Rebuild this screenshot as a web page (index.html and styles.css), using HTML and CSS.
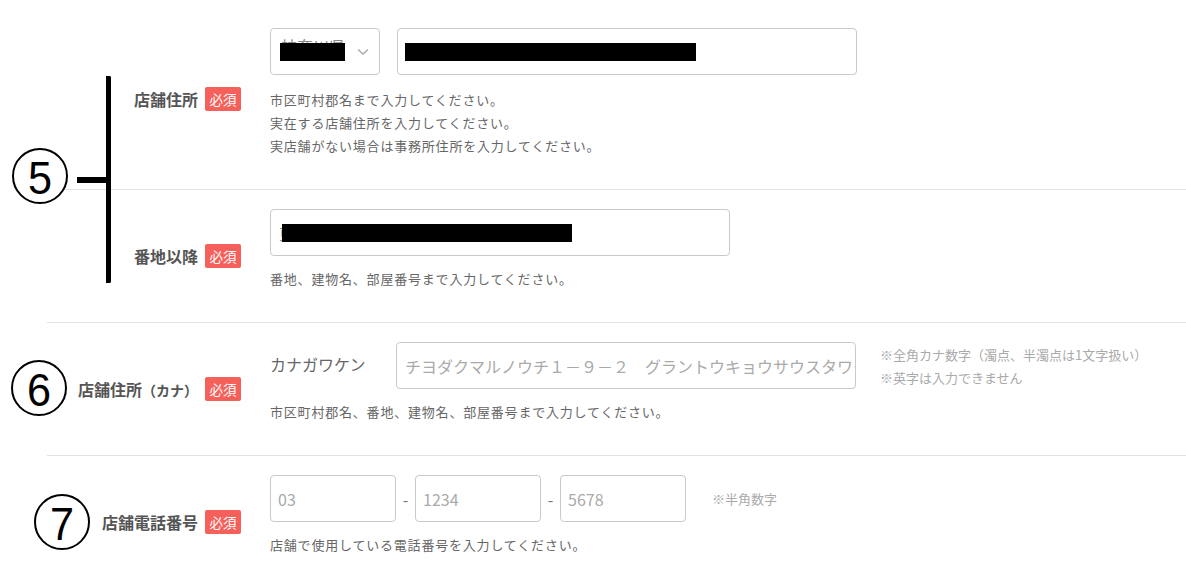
FILE: index.html
```html
<!DOCTYPE html>
<html lang="ja">

<head>
  <meta charset="UTF-8" />
  <meta name="viewport" content="width=device-width, initial-scale=1.0" />
  <title>店舗情報</title>
  <link rel="stylesheet" href="styles.css">
</head>

<body>
  <div class="page">
    <!-- 注釈 -->
    <div class="annot annot-5"><span>5</span></div>
    <div class="bracket"></div>
    <div class="bracket-tick"></div>
    <div class="annot annot-6"><span>6</span></div>
    <div class="annot annot-7"><span>7</span></div>

    <div class="form">
      <div class="row row-first">
        <div class="row-label"><span class="label">店舗住所</span><span class="badge">必須</span></div>
        <div class="row-body">
          <div class="field-line">
            <div class="field select">
              <span class="value">神奈川県</span>
              <span class="redact redact-select"></span>
              <svg class="chev" width="12" height="8" viewBox="0 0 12 8"><path d="M1 1.5 L6 6 L11 1.5" fill="none" stroke="#aaa" stroke-width="1.5"/></svg>
            </div>
            <div class="field wide gap-left">
              <span class="value">厂</span><span class="redact redact-city"></span>
            </div>
          </div>
          <p class="help">市区町村郡名まで入力してください。<br>実在する店舗住所を入力してください。<br>実店舗がない場合は事務所住所を入力してください。</p>
        </div>
      </div>

      <div class="row">
        <div class="row-label"><span class="label">番地以降</span><span class="badge">必須</span></div>
        <div class="row-body">
          <div class="field-line">
            <div class="field wide">
              <span class="value">東</span><span class="redact redact-street"></span>
            </div>
          </div>
          <p class="help">番地、建物名、部屋番号まで入力してください。</p>
        </div>
      </div>

      <div class="row">
        <div class="row-label"><span class="label">店舗住所<small>（カナ）</small></span><span class="badge">必須</span></div>
        <div class="row-body">
          <div class="field-line">
            <div class="prefix">カナガワケン</div>
            <div class="field wide">
              <span class="placeholder nowrap">チヨダクマルノウチ１－９－２　グラントウキョウサウスタワー</span>
            </div>
            <div class="note">※全角カナ数字（濁点、半濁点は1文字扱い）<br>※英字は入力できません</div>
          </div>
          <p class="help">市区町村郡名、番地、建物名、部屋番号まで入力してください。</p>
        </div>
      </div>

      <div class="row">
        <div class="row-label"><span class="label">店舗電話番号</span><span class="badge">必須</span></div>
        <div class="row-body">
          <div class="field-line">
            <div class="field tel"><span class="placeholder">03</span></div>
            <span class="dash">-</span>
            <div class="field tel"><span class="placeholder">1234</span></div>
            <span class="dash">-</span>
            <div class="field tel"><span class="placeholder">5678</span></div>
            <div class="note note-tel">※半角数字</div>
          </div>
          <p class="help">店舗で使用している電話番号を入力してください。</p>
        </div>
      </div>
    </div>
  </div>
</body>

</html>
```

FILE: styles.css
```css
body {
  margin: 0;
  background: #fff;
  font-family: "Noto Sans CJK JP", "Noto Sans", sans-serif;
  color: #555;
}

.page {
  position: relative;
  width: 1186px;
  height: 585px;
  overflow: hidden;
}

.form {
  margin-left: 47px;
  padding-top: 9px;
}

.row {
  display: grid;
  grid-template-columns: 194px 1fr;
  column-gap: 29px;
  border-top: 1px solid #e2e2e2;
}

.row-first {
  border-top: none;
  border-bottom: 1px solid #e2e2e2;
}

.row-first + .row {
  border-top: none;
}

.row-label {
  display: flex;
  justify-content: flex-end;
  align-items: center;
  gap: 7px;
}

.label {
  font-size: 16px;
  font-weight: bold;
  color: #555;
  white-space: nowrap;
}

.label small {
  font-size: 14px;
}

.badge {
  display: inline-flex;
  align-items: center;
  justify-content: center;
  width: 36px;
  height: 24px;
  border-radius: 2px;
  background: #f5605a;
  color: #fff;
  font-size: 13.5px;
}

.row-body {
  padding: 19px 0 32px;
}

.field-line {
  display: flex;
  align-items: center;
}

.field {
  position: relative;
  display: flex;
  align-items: center;
  box-sizing: border-box;
  height: 47px;
  padding: 0 8px;
  border: 1px solid #c9c9c9;
  border-radius: 4px;
  font-size: 16px;
  overflow: hidden;
}

.select {
  width: 110px;
  padding-left: 10px;
}

.select .value {
  position: relative;
  top: -6px;
}

.wide {
  width: 460px;
}

.gap-left {
  margin-left: 17px;
}

.tel {
  width: 126px;
  padding-left: 7px;
}

.value {
  color: #888;
}

.placeholder {
  color: #aaa;
}

.nowrap {
  white-space: nowrap;
}

.redact {
  display: inline-block;
  height: 18px;
  background: #000;
}

.redact-select {
  position: absolute;
  left: 9px;
  top: 14px;
  width: 65px;
}

.redact-city {
  width: 291px;
  margin-left: -17px;
}

.redact-street {
  width: 290px;
  margin-left: -13px;
}

.chev {
  position: absolute;
  right: 10px;
  top: 19px;
}

.prefix {
  width: 126px;
  font-size: 16px;
  color: #666;
  margin-top: -4px;
}

.dash {
  width: 19px;
  text-align: center;
  font-size: 16px;
  color: #777;
}

.note {
  margin-left: 24px;
  font-size: 13px;
  line-height: 23px;
  color: #aaa;
}

.note-tel {
  margin-left: 26px;
}

.help {
  margin: 11px 0 0;
  font-size: 13px;
  line-height: 23px;
  color: #666;
  letter-spacing: 0.8px;
}

.row-first .help {
  margin-top: 13px;
}

/* 注釈 */
.annot {
  position: absolute;
  box-sizing: border-box;
  width: 56px;
  height: 56px;
  border: 2px solid #000;
  border-radius: 50%;
  background: #fff;
  display: flex;
  align-items: center;
  justify-content: center;
  font-family: "Liberation Sans", sans-serif;
  font-size: 47px;
  color: #000;
  z-index: 2;
}

.annot span {
  line-height: 1;
  margin-top: 2px;
  transform: scaleX(0.92);
}

.annot-5 {
  left: 12px;
  top: 148px;
}

.annot-6 {
  left: 11px;
  top: 360px;
}

.annot-7 {
  left: 34px;
  top: 494px;
}

.bracket {
  position: absolute;
  left: 106px;
  top: 76px;
  width: 3px;
  height: 207px;
  border-left: 5px solid #000;
  border-top: 2px solid #000;
  border-bottom: 2px solid #000;
  border-radius: 0 2px 2px 0;
  box-sizing: border-box;
  z-index: 2;
}

.bracket-tick {
  position: absolute;
  left: 77px;
  top: 177px;
  width: 30px;
  height: 6px;
  background: #000;
  z-index: 2;
}
```
